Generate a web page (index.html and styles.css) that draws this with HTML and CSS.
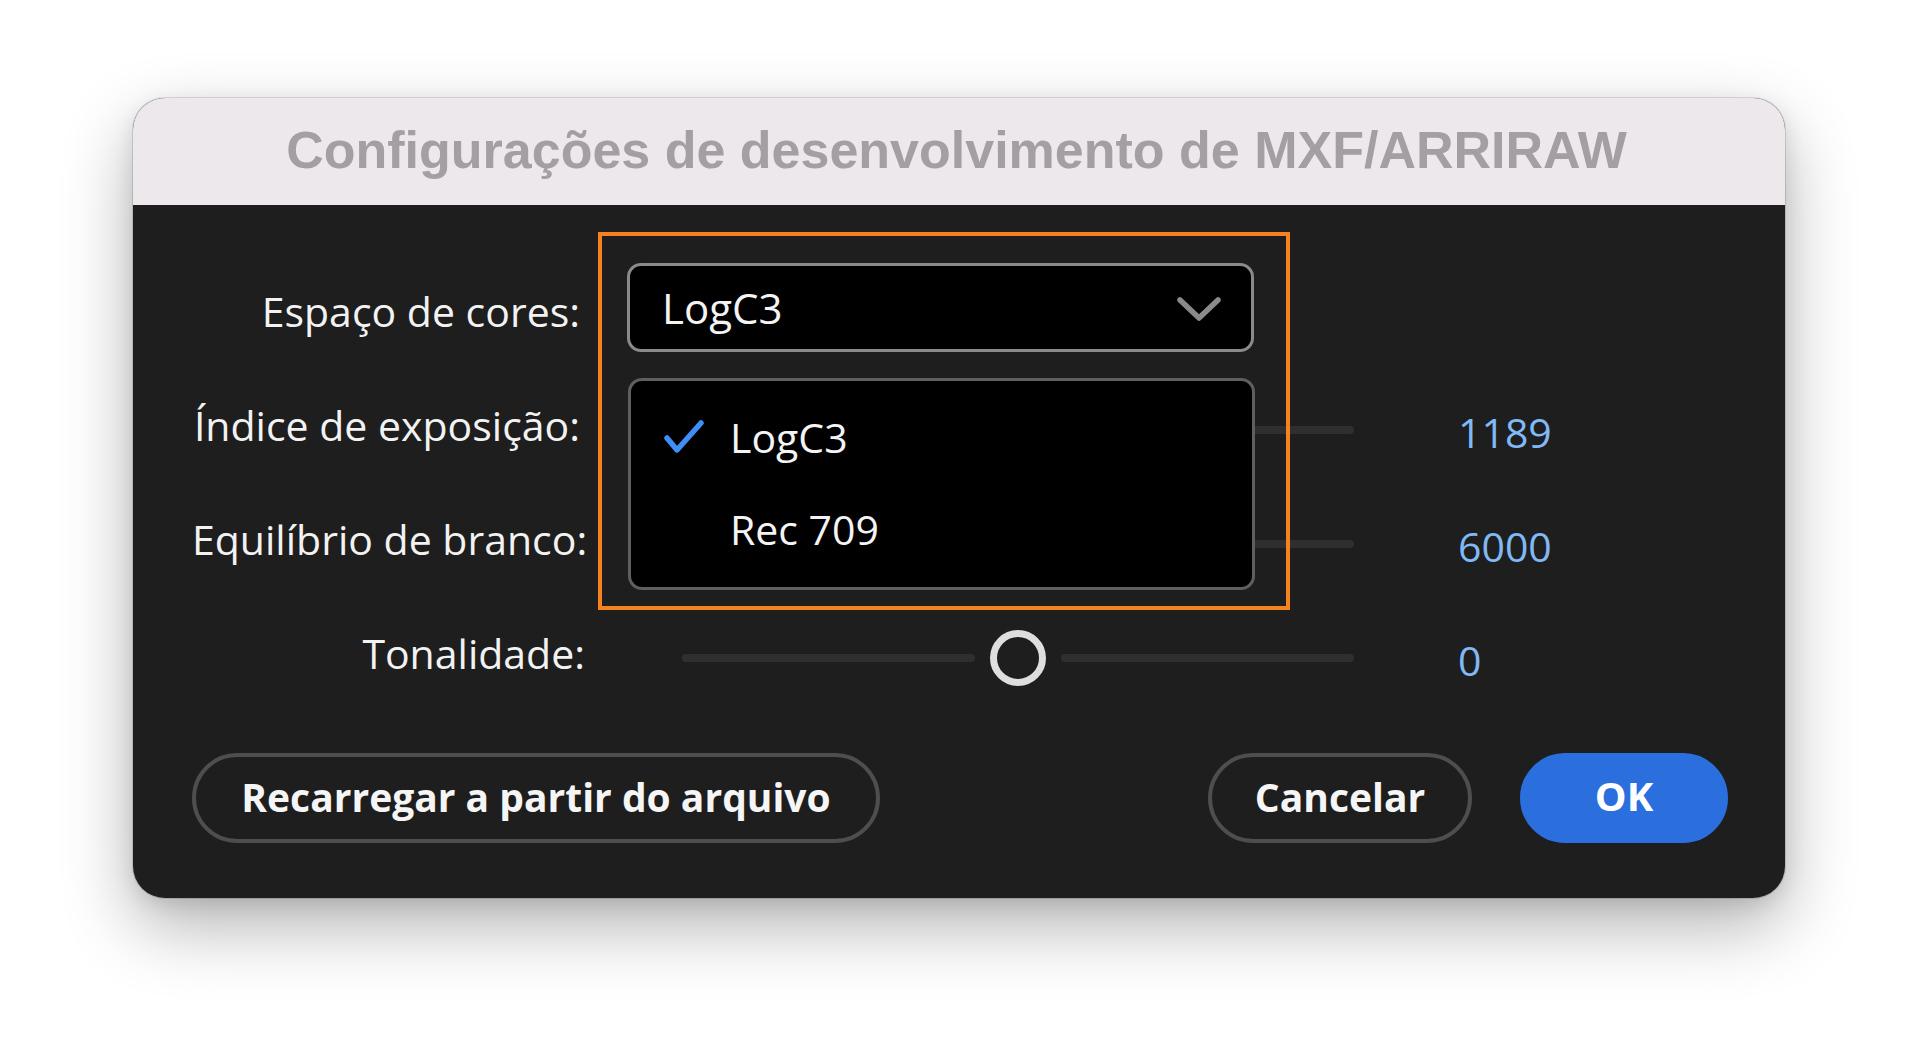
FILE: index.html
```html
<!DOCTYPE html>
<html lang="pt-BR">
<head>
<meta charset="utf-8">
<title>Configurações de desenvolvimento de MXF/ARRIRAW</title>
<link rel="stylesheet" href="styles.css">
</head>
<body>
<div class="dialog">
  <div class="titlebar">
    <h1 class="title">Configurações de desenvolvimento de MXF/ARRIRAW</h1>
  </div>
  <div class="content">
    <div class="row row-select">
      <div class="label">Espaço de cores:</div>
      <div class="select">
        <span class="select-value">LogC3</span>
        <svg class="chevron" width="44" height="26" viewBox="0 0 44 26"><path d="M3 4 L22 22 L41 4" fill="none" stroke="#8a8a8a" stroke-width="5.5" stroke-linecap="round" stroke-linejoin="round"/></svg>
      </div>
    </div>
    <div class="row row-slider row-first">
      <div class="label">Índice de exposição:</div>
      <div class="slider">
        <div class="track"></div>
        <div class="knob" style="left: 40%"></div>
      </div>
      <div class="value">1189</div>
    </div>
    <div class="row row-slider">
      <div class="label">Equilíbrio de branco:</div>
      <div class="slider">
        <div class="track"></div>
        <div class="knob" style="left: 45%"></div>
      </div>
      <div class="value">6000</div>
    </div>
    <div class="row row-slider">
      <div class="label label-tone">Tonalidade:</div>
      <div class="slider">
        <div class="track track-left"></div>
        <div class="track track-right"></div>
        <div class="knob" style="left: 50%"></div>
      </div>
      <div class="value">0</div>
    </div>
    <div class="buttons">
      <button class="btn btn-reload">Recarregar a partir do arquivo</button>
      <div class="spacer"></div>
      <button class="btn btn-cancel">Cancelar</button>
      <button class="btn btn-ok">OK</button>
    </div>
  </div>
  <div class="menu">
    <div class="menu-item">
      <svg class="check" width="42" height="36" viewBox="0 0 42 36"><path d="M4 19 L14 31 L38 4" fill="none" stroke="#3f8ef6" stroke-width="5.5" stroke-linecap="round" stroke-linejoin="round"/></svg>
      <span class="item-text">LogC3</span>
    </div>
    <div class="menu-item">
      <span class="check-space"></span>
      <span class="item-text">Rec 709</span>
    </div>
  </div>
  <div class="highlight"></div>
</div>
</body>
</html>
```

FILE: styles.css
```css
* { box-sizing: border-box; }

html, body {
  margin: 0;
  padding: 0;
  background: #ffffff;
}

body {
  width: 1920px;
  height: 1060px;
  overflow: hidden;
  padding: 98px 0 0 133px;
  font-family: "Open Sans", "Noto Sans", sans-serif;
}

.dialog {
  position: relative;
  width: 1652px;
  height: 800px;
  border-radius: 32px;
  background: #1e1e1e;
  display: flex;
  flex-direction: column;
  box-shadow: 0 0 0 1px rgba(0,0,0,0.12), 0 28px 70px rgba(0,0,0,0.30), 0 6px 20px rgba(0,0,0,0.10);
}

.titlebar {
  height: 107px;
  background: #ede8ec;
  border-radius: 32px 32px 0 0;
  display: flex;
  align-items: center;
  justify-content: center;
  flex-shrink: 0;
}

.title {
  margin: 0;
  font-family: "Liberation Sans", Arial, sans-serif;
  font-weight: bold;
  font-size: 52px;
  color: #a39fa3;
  line-height: 1;
  padding-right: 5px;
  padding-bottom: 4px;
}

.content {
  flex: 1;
  padding: 58px 57px 55px 59px;
  display: flex;
  flex-direction: column;
}

.row {
  display: flex;
  align-items: center;
}

.label {
  width: 388px;
  flex-shrink: 0;
  text-align: right;
  font-size: 41px;
  font-weight: 500;
  color: #f2f2f2;
  line-height: 1;
  white-space: nowrap;
  padding-bottom: 10px;
}

.label-tone {
  width: 393px;
  margin-right: -5px;
}

.row-select {
  height: 89px;
}

.row-select .label {
  padding-top: 8px;
  padding-bottom: 0;
}

.select {
  margin-left: 47px;
  width: 627px;
  height: 89px;
  background: #000;
  border: 3px solid #8a8a8a;
  border-radius: 14px;
  display: flex;
  align-items: center;
  padding: 0 30px 0 32px;
}

.select-value {
  flex: 1;
  font-size: 42px;
  font-weight: 500;
  color: #f4f4f4;
  line-height: 1;
}

.chevron {
  display: block;
  margin-top: 2px;
}

.row-slider {
  height: 60px;
  margin-top: 54px;
}

.row-first {
  margin-top: 48px;
}

.slider {
  position: relative;
  margin-left: 102px;
  width: 672px;
  height: 60px;
  flex-shrink: 0;
}

.track {
  position: absolute;
  left: 0;
  right: 0;
  top: 26px;
  height: 8px;
  border-radius: 4px;
  background: #2f2f2f;
}

.track-left { right: calc(50% + 43px); }
.track-right { left: calc(50% + 43px); }

.knob {
  position: absolute;
  top: 2px;
  width: 56px;
  height: 56px;
  margin-left: -28px;
  border-radius: 50%;
  border: 7px solid #dedede;
  background: #1e1e1e;
}

.value {
  margin-left: 104px;
  font-size: 41px;
  font-weight: 500;
  color: #80b9f4;
  line-height: 1;
  padding-top: 4px;
}

.buttons {
  margin-top: 65px;
  display: flex;
  align-items: center;
  gap: 48px;
}

.spacer { flex: 1; }

.btn {
  height: 90px;
  border-radius: 45px;
  border: 4px solid #4e4e4e;
  background: transparent;
  color: #f5f5f5;
  font-family: "Open Sans", "Noto Sans", sans-serif;
  font-weight: 700;
  font-size: 39px;
  line-height: 1;
  padding: 0 0 4px 0;
  display: flex;
  align-items: center;
  justify-content: center;
}

.btn-reload { width: 688px; }
.btn-cancel { width: 264px; }
.btn-ok {
  width: 208px;
  background: #2b6fdf;
  border-color: #2b6fdf;
  color: #ffffff;
  font-size: 40px;
}

.menu {
  position: absolute;
  left: 495px;
  top: 280px;
  width: 627px;
  height: 212px;
  background: #000;
  border: 3px solid #5f5f5f;
  border-radius: 14px;
  padding: 13px 0 0 32px;
}

.menu-item {
  height: 92px;
  display: flex;
  align-items: center;
  gap: 25px;
  font-size: 41px;
  font-weight: 500;
  color: #f4f4f4;
  line-height: 1;
}

.item-text {
  padding-bottom: 6px;
}

.check { display: block; margin-top: -6px; }
.check-space { width: 42px; flex-shrink: 0; }

.highlight {
  position: absolute;
  left: 465px;
  top: 134px;
  width: 692px;
  height: 378px;
  border: 4px solid #f5821f;
  pointer-events: none;
}
```
